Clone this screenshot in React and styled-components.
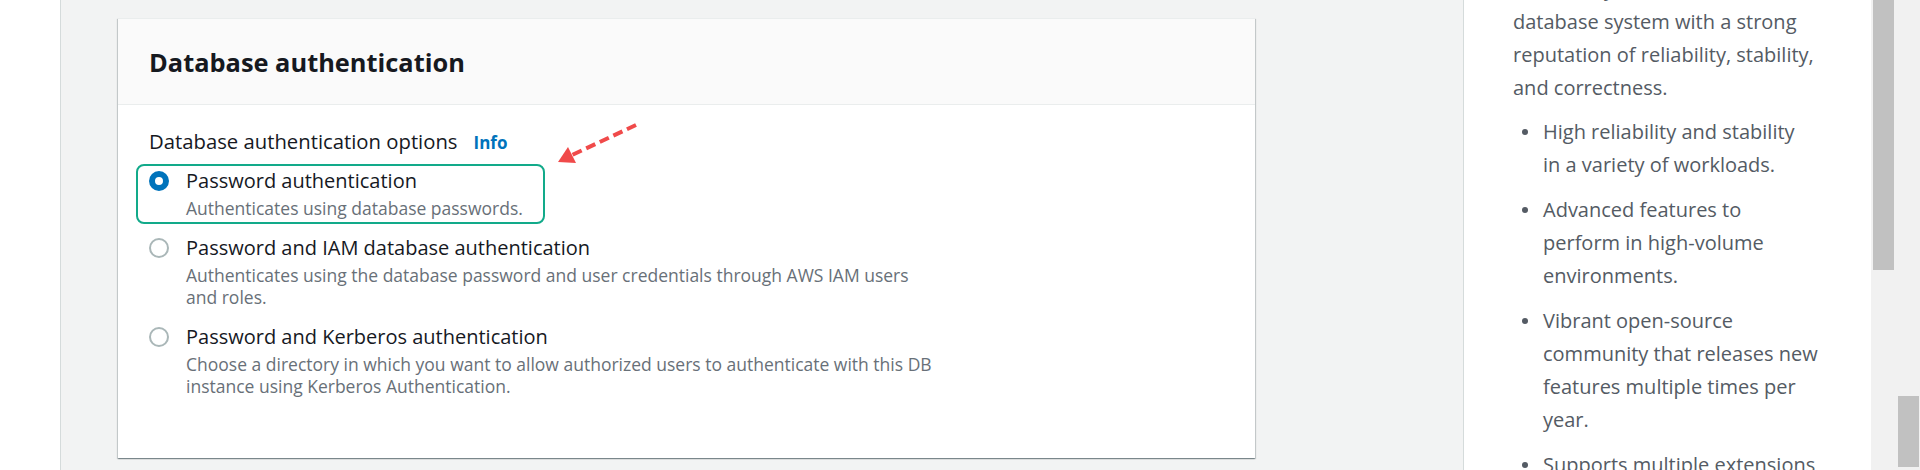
import React from "react";
import styled, { createGlobalStyle } from "styled-components";

const GlobalStyle = createGlobalStyle`
  html, body {
    margin: 0;
    padding: 0;
    background: #f2f3f3;
    font-family: "Open Sans", "Liberation Sans", Arial, sans-serif;
    color: #16191f;
  }
`;

const Page = styled.div`
  display: flex;
  height: 470px;
  overflow: hidden;
  background: #f2f3f3;
`;

const LeftRail = styled.div`
  width: 60px;
  flex-shrink: 0;
  background: #ffffff;
  border-right: 1px solid #d5dbdb;
`;

const Content = styled.main`
  flex: 1;
  padding: 18px 0 0 57px;
`;

const Card = styled.section`
  width: 1137px;
  height: 440px;
  box-sizing: border-box;
  background: #ffffff;
  border-top: 1px solid #eaeded;
  box-shadow: 0 1px 1px 0 rgba(0, 28, 36, 0.3),
    1px 1px 1px 0 rgba(0, 28, 36, 0.15), -1px 1px 1px 0 rgba(0, 28, 36, 0.15);
`;

const CardHeader = styled.header`
  height: 86px;
  box-sizing: border-box;
  display: flex;
  align-items: center;
  padding: 0 31px;
  background: #fafafa;
  border-bottom: 1px solid #eaeded;
`;

const Heading = styled.h2`
  margin: 0;
  font-size: 25.4px;
  font-weight: 700;
  color: #16191f;
`;

const CardBody = styled.div`
  position: relative;
  padding: 24px 31px 0;
`;

const FieldLabel = styled.div`
  display: flex;
  align-items: baseline;
  gap: 16px;
  font-size: 20.3px;
  line-height: 24px;
`;

const InfoLink = styled.a`
  font-size: 17px;
  font-weight: 700;
  color: #0073bb;
  text-decoration: none;
`;

const RadioGroup = styled.div`
  display: flex;
  flex-direction: column;
  gap: 7px;
  margin: 9px 0 0 -13px;
`;

const Option = styled.label`
  display: grid;
  grid-template-columns: 20px auto;
  column-gap: 17px;
  width: ${(p) => (p.$highlight ? "409px" : "fit-content")};
  box-sizing: border-box;
  padding: 3px 11px;
  border: 2px solid ${(p) => (p.$highlight ? "#12aa8a" : "transparent")};
  border-radius: 8px;
  cursor: pointer;
`;

const Radio = styled.span`
  width: 20px;
  height: 20px;
  margin-top: 2px;
  box-sizing: border-box;
  border-radius: 50%;
  background: #ffffff;
  border: ${(p) => (p.$checked ? "6px solid #0073bb" : "2px solid #aab7b8")};
`;

const OptionTitle = styled.div`
  font-size: 20px;
  line-height: 24px;
  color: #16191f;
  white-space: nowrap;
`;

const OptionDesc = styled.div`
  grid-column: 2;
  margin-top: 4px;
  font-size: 17.5px;
  line-height: 22px;
  color: #687078;
  white-space: nowrap;
`;

const Arrow = styled.svg`
  position: absolute;
  left: 437px;
  top: 13px;
  overflow: visible;
`;

const SidePanel = styled.aside`
  width: 408px;
  flex-shrink: 0;
  background: #ffffff;
  border-left: 1px solid #d5dbdb;
  padding-left: 49px;
  box-sizing: border-box;
  overflow: hidden;
  color: #545b64;
  font-size: 20px;
  line-height: 33px;
`;

const Intro = styled.p`
  margin: -61px 0 11px;
  white-space: nowrap;
`;

const Points = styled.ul`
  list-style: none;
  margin: 0;
  padding: 0;
  display: flex;
  flex-direction: column;
  gap: 12px;
`;

const Point = styled.li`
  display: flex;
  align-items: flex-start;
  white-space: nowrap;
`;

const Dot = styled.span`
  width: 6px;
  height: 6px;
  margin: 14px 15px 0 9px;
  border-radius: 50%;
  background: #545b64;
  flex-shrink: 0;
`;

const ScrollArea = styled.div`
  display: flex;
  background: #f1f1f1;
  width: 49px;
  flex-shrink: 0;
`;

const ScrollTrack = styled.div`
  width: ${(p) => p.$w}px;
  padding-left: ${(p) => p.$pad}px;
  box-sizing: border-box;
`;

const Thumb = styled.div`
  width: 21px;
  height: ${(p) => p.$h}px;
  margin-top: ${(p) => p.$top}px;
  background: #c1c1c1;
`;

const options = [
  {
    title: "Password authentication",
    desc: ["Authenticates using database passwords."],
    checked: true,
  },
  {
    title: "Password and IAM database authentication",
    desc: [
      "Authenticates using the database password and user credentials through AWS IAM users",
      "and roles.",
    ],
  },
  {
    title: "Password and Kerberos authentication",
    desc: [
      "Choose a directory in which you want to allow authorized users to authenticate with this DB",
      "instance using Kerberos Authentication.",
    ],
  },
];

const points = [
  ["High reliability and stability", "in a variety of workloads."],
  ["Advanced features to", "perform in high-volume", "environments."],
  [
    "Vibrant open-source",
    "community that releases new",
    "features multiple times per",
    "year.",
  ],
  ["Supports multiple extensions", "and add-ons."],
];

const Lines = ({ lines }) =>
  lines.map((l, i) => (
    <React.Fragment key={i}>
      {l}
      {i < lines.length - 1 && <br />}
    </React.Fragment>
  ));

const App = () => {
  return (
    <Page>
      <GlobalStyle />
      <LeftRail />
      <Content>
        <Card>
          <CardHeader>
            <Heading>Database authentication</Heading>
          </CardHeader>
          <CardBody>
            <FieldLabel>
              Database authentication options
              <InfoLink href="#">Info</InfoLink>
            </FieldLabel>
            <RadioGroup>
              {options.map((o) => (
                <Option key={o.title} $highlight={o.checked}>
                  <Radio $checked={o.checked} />
                  <OptionTitle>{o.title}</OptionTitle>
                  <OptionDesc>
                    <Lines lines={o.desc} />
                  </OptionDesc>
                </Option>
              ))}
            </RadioGroup>
            <Arrow width="85" height="47" viewBox="0 0 85 47">
              <line
                x1="81"
                y1="7"
                x2="17"
                y2="37"
                stroke="#f04a4a"
                strokeWidth="4"
                strokeDasharray="10 5"
              />
              <polygon points="3,44 21,45 13,29" fill="#f04a4a" />
            </Arrow>
          </CardBody>
        </Card>
      </Content>
      <SidePanel>
        <Intro>
          PostgreSQL is a powerful, open-
          <br />
          source object-relational
          <br />
          database system with a strong
          <br />
          reputation of reliability, stability,
          <br />
          and correctness.
        </Intro>
        <Points>
          {points.map((p) => (
            <Point key={p[0]}>
              <Dot />
              <span>
                <Lines lines={p} />
              </span>
            </Point>
          ))}
        </Points>
      </SidePanel>
      <ScrollArea>
        <ScrollTrack $w={25} $pad={2}>
          <Thumb $h={270} $top={0} />
        </ScrollTrack>
        <ScrollTrack $w={24} $pad={2}>
          <Thumb $h={71} $top={396} />
        </ScrollTrack>
      </ScrollArea>
    </Page>
  );
};

export default App;
